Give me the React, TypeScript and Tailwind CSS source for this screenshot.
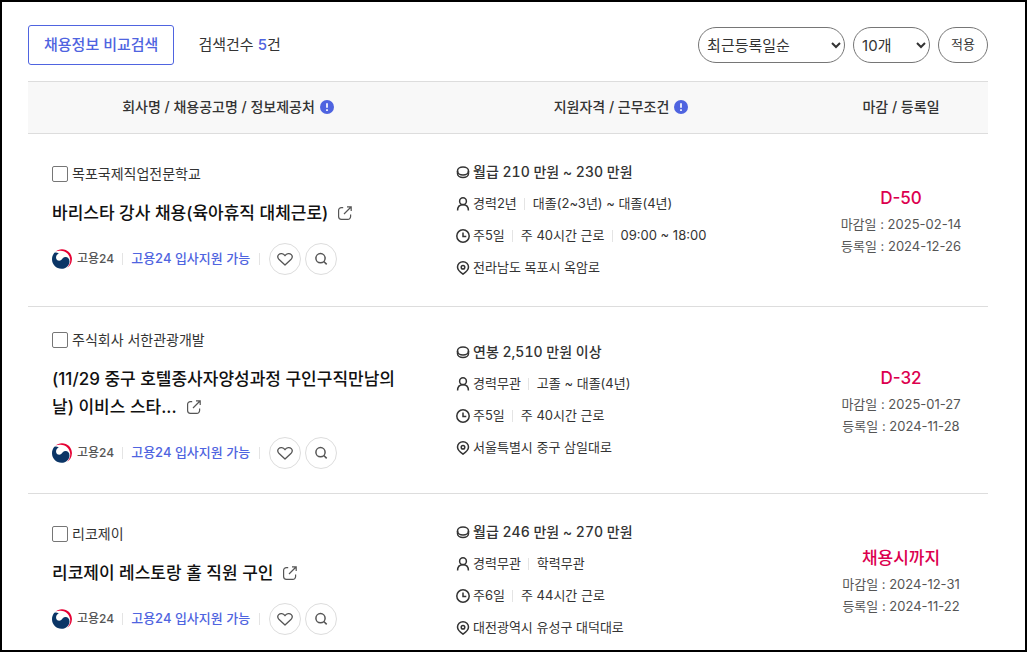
import type { ReactNode } from "react";

type Job = {
  id: string;
  company: string;
  title: string;
  pay: string;
  career: string[];
  time: string[];
  place: string;
  dday: string;
  close: string;
  posted: string;
};

const jobs: Job[] = [
  {
    id: "job-1",
    company: "목포국제직업전문학교",
    title: "바리스타 강사 채용(육아휴직 대체근로)",
    pay: "월급 210 만원 ~ 230 만원",
    career: ["경력2년", "대졸(2~3년) ~ 대졸(4년)"],
    time: ["주5일", "주 40시간 근로", "09:00 ~ 18:00"],
    place: "전라남도 목포시 옥암로",
    dday: "D-50",
    close: "2025-02-14",
    posted: "2024-12-26",
  },
  {
    id: "job-2",
    company: "주식회사 서한관광개발",
    title: "(11/29 중구 호텔종사자양성과정 구인구직만남의날) 이비스 스타...",
    pay: "연봉 2,510 만원 이상",
    career: ["경력무관", "고졸 ~ 대졸(4년)"],
    time: ["주5일", "주 40시간 근로"],
    place: "서울특별시 중구 삼일대로",
    dday: "D-32",
    close: "2025-01-27",
    posted: "2024-11-28",
  },
  {
    id: "job-3",
    company: "리코제이",
    title: "리코제이 레스토랑 홀 직원 구인",
    pay: "월급 246 만원 ~ 270 만원",
    career: ["경력무관", "학력무관"],
    time: ["주6일", "주 44시간 근로"],
    place: "대전광역시 유성구 대덕대로",
    dday: "채용시까지",
    close: "2024-12-31",
    posted: "2024-11-22",
  },
];

function InfoIcon() {
  return (
    <svg width="14" height="14" viewBox="0 0 14 14" aria-hidden="true">
      <circle cx="7" cy="7" r="7" fill="#4f64e0" />
      <path d="M7 3.2v4.6M7 9.2v1.7" stroke="#fff" strokeWidth="1.7" />
    </svg>
  );
}

function LinkIcon() {
  return (
    <svg className="ml-2.5 inline-block align-[-1px]" width="14" height="14" viewBox="0 0 14 14" fill="none" stroke="#555" strokeWidth="1.2" aria-hidden="true">
      <path d="M5.200 1.600H3.400A2.800 2.800 0 0 0 .6 4.400v6.200a2.800 2.800 0 0 0 2.800 2.800h6.400a2.800 2.800 0 0 0 2.800-2.800V8.600M6 8 13 1M9 .8h4.200V5" />
    </svg>
  );
}

function GovMark() {
  return (
    <svg width="20" height="20" viewBox="0 0 20 20" aria-hidden="true">
      <path d="M3.400 2.600C6 .2 10.200-.6 13.800.9C18 2.600 20.200 6.600 19.900 10.800C19.700 14.200 17.900 17.200 15.200 18.800C17.800 16 18.700 12.800 18 9.400C17.200 5.600 14.200 2.700 10.200 2.100C7.800 1.700 5.400 1.800 3.400 2.600Z" fill="#e60033" />
      <path d="M2.400 3.800C.9 5.500 0 7.700 0 10.200C0 15.500 4.300 19.700 9.500 19.700C14.300 19.700 17.500 16.200 17.500 12.400C17.500 9.600 15.800 7.900 13.600 7.900C11.200 7.900 10.600 9.800 9.200 11C7.600 12.400 4.900 11.900 4.200 9.600C3.600 7.400 4.800 5.300 6.800 4.500C5.400 3.600 3.800 3.400 2.400 3.800Z" fill="#0b3566" />
    </svg>
  );
}

function HeartIcon() {
  return (
    <svg width="16" height="16" viewBox="0 0 16 16" fill="none" stroke="#555" strokeWidth="1.3" strokeLinejoin="round" aria-hidden="true">
      <path d="M8 14 2.100 8.600C.6 7 .5 4.900 1.700 3.600 3.300 2 6.300 2.200 8 4.700 9.700 2.200 12.700 2 14.300 3.600 15.500 4.900 15.400 7 13.900 8.600Z" />
    </svg>
  );
}

function SearchIcon() {
  return (
    <svg width="14" height="14" viewBox="0 0 14 14" fill="none" stroke="#555" strokeWidth="1.500" aria-hidden="true">
      <circle cx="6.500" cy="6.200" r="4.600" />
      <path d="m9.800 9.500 2.900 2.900" />
    </svg>
  );
}

function PayIcon() {
  return (
    <g>
      <ellipse cx="7" cy="6" rx="5.500" ry="4" />
      <path d="M1.500 6v2.500c0 2.300 2.400 4 5.500 4s5.500-1.700 5.500-4V6" />
    </g>
  );
}

function PersonIcon() {
  return (
    <g>
      <circle cx="7" cy="4.200" r="3.400" />
      <path d="M1.600 13.500C1.600 10 3.700 7.800 7 7.800s5.400 2.200 5.400 5.700" />
    </g>
  );
}

function ClockIcon() {
  return (
    <g>
      <circle cx="7" cy="7" r="6.200" />
      <path d="M7 3.500V7.500h3.300" />
    </g>
  );
}

function PinIcon() {
  return (
    <g>
      <path d="M7 13.200C3.500 10.800 1.500 8.500 1.500 6a5.500 5.200 0 0 1 11 0c0 2.500-2 4.800-5.500 7.200Z" />
      <circle cx="7" cy="6.200" r="1.800" />
    </g>
  );
}

function Divider() {
  return <span className="h-3 w-px shrink-0 bg-[#e4e4e4]" />;
}

function Line({ icon, parts, strong = false }: { icon: ReactNode; parts: string[]; strong?: boolean }) {
  return (
    <li className={strong ? "flex h-8 items-center text-sm font-medium tabular-nums" : "flex h-8 items-center text-[13px]"}>
      <svg className="mr-[3px] shrink-0" width="14" height="14" viewBox="0 0 14 14" fill="none" stroke="#333" strokeWidth="1.500" aria-hidden="true">
        {icon}
      </svg>
      <span className="flex items-center gap-[7px]">
        {parts.map((part, i) => (
          <span key={part} className="flex items-center gap-2">
            {i > 0 && <Divider />}
            {part}
          </span>
        ))}
      </span>
    </li>
  );
}

function JobRow({ job }: { job: Job }) {
  return (
    <tr className="border-b border-[#ddd]">
      <td className="px-6 py-6 align-middle">
        <div className="flex h-[18px] items-center gap-1">
          <input id={job.id} type="checkbox" className="size-4 appearance-none rounded-[2px] border border-[#767676] bg-white checked:bg-[#4f64e0]" />
          <label htmlFor={job.id} className="text-sm leading-[18px] text-[#333]">{job.company}</label>
        </div>
        <a href="#detail" className="my-4 block text-[17px] leading-7 font-medium break-all text-[#111]">
          {job.title}
          <LinkIcon />
        </a>
        <div className="flex items-center">
          <GovMark />
          <span className="ml-[5px] text-xs font-medium text-[#555]">고용24</span>
          <span className="mx-2 flex"><Divider /></span>
          <span className="text-[13px] font-medium text-[#4f64e0]">고용24 입사지원 가능</span>
          <span className="mx-[9px] flex"><Divider /></span>
          <button type="button" aria-label="관심 채용정보 등록" className="flex size-8 items-center justify-center rounded-full border border-[#ddd]"><HeartIcon /></button>
          <button type="button" aria-label="채용정보 보기" className="ml-1 flex size-8 items-center justify-center rounded-full border border-[#ddd]"><SearchIcon /></button>
        </div>
      </td>
      <td className="px-7 py-[22px] align-middle">
        <ul className="text-[#333]">
          <Line icon={<PayIcon />} parts={[job.pay]} strong />
          <Line icon={<PersonIcon />} parts={job.career} />
          <Line icon={<ClockIcon />} parts={job.time} />
          <Line icon={<PinIcon />} parts={[job.place]} />
        </ul>
      </td>
      <td className="text-center align-middle text-[13px] leading-[22px] text-[#555]">
        <strong className="block text-[17px] leading-[30px] font-medium text-[#dc004e]">{job.dday}</strong>
        <p>마감일 : {job.close}</p>
        <p>등록일 : {job.posted}</p>
      </td>
    </tr>
  );
}

export default function App() {
  return (
    <main className="h-screen overflow-y-auto border-2 border-black bg-white pt-[23px] pr-[37px] pl-[26px] font-['Inter','Noto_Sans_CJK_KR',sans-serif] text-[#333] [scrollbar-width:none]">
      <div className="mb-4 flex items-center">
        <button type="button" className="h-10 rounded-[3px] border border-[#4f64e0] px-[15px] text-[15px] font-medium text-[#4f64e0]">채용정보 비교검색</button>
        <p className="ml-6 text-[15px]">
          검색건수 <strong className="font-medium text-[#4f64e0]">5</strong>건
        </p>
        <form className="ml-auto flex gap-2" onSubmit={(e) => e.preventDefault()}>
          <select aria-label="정렬 기준" className="h-9 w-[147px] rounded-full border border-[#767676] bg-white px-1 text-[15px]">
            <option>최근등록일순</option>
            <option>마감일순</option>
          </select>
          <select aria-label="표시 개수" className="h-9 w-[77px] rounded-full border border-[#767676] bg-white px-1 text-[15px]">
            <option>10개</option>
            <option>30개</option>
          </select>
          <button type="submit" className="h-9 rounded-full border border-[#767676] px-3 text-[13px]">적용</button>
        </form>
      </div>
      <table className="w-full table-fixed border-collapse border-t border-[#ddd]">
        <thead>
          <tr className="h-[52px] border-b border-[#ddd] bg-[#f8f8f8] text-sm">
            <th scope="col" className="w-5/12 pb-[2px] font-medium">
              <span className="flex items-center justify-center gap-[5px]">회사명 / 채용공고명 / 정보제공처<InfoIcon /></span>
            </th>
            <th scope="col" className="pb-[2px] font-medium">
              <span className="flex items-center justify-center gap-[5px]">지원자격 / 근무조건<InfoIcon /></span>
            </th>
            <th scope="col" className="w-[174px] pb-[2px] font-medium">마감 / 등록일</th>
          </tr>
        </thead>
        <tbody>
          {jobs.map((job) => (
            <JobRow key={job.id} job={job} />
          ))}
        </tbody>
      </table>
    </main>
  );
}
